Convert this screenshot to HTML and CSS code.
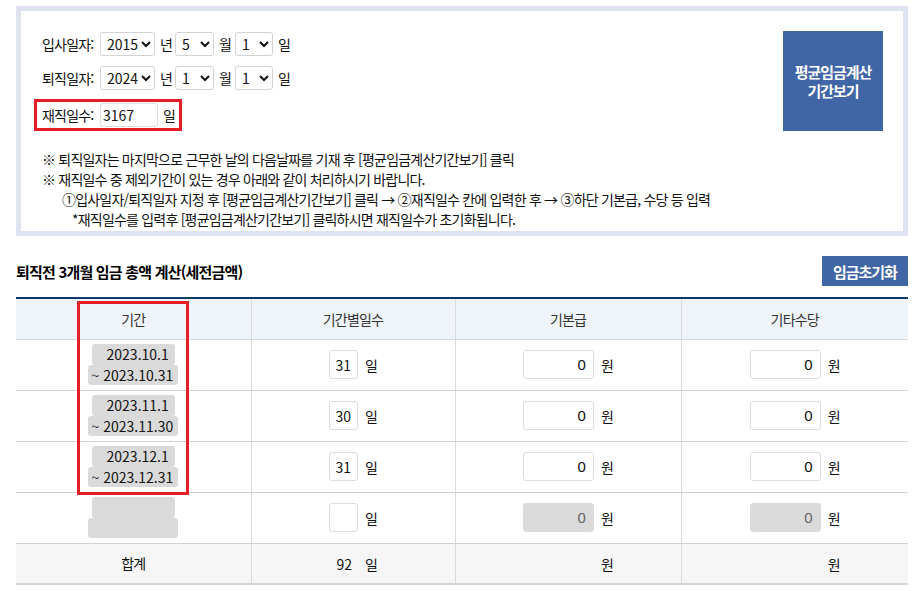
FILE: index.html
```html
<!DOCTYPE html>
<html lang="ko">
<head>
<meta charset="utf-8">
<title>평균임금 계산</title>
<link rel="stylesheet" href="styles.css">
</head>
<body>
<div class="wrap">
  <div class="box">
    <div class="top">
      <div class="dates">
        <div class="row">
          <span class="lbl">입사일자:</span>
          <select class="sel sel-y"><option>2015</option></select><span class="unit u-y">년</span>
          <select class="sel sel-m"><option>5</option></select><span class="unit u-m">월</span>
          <select class="sel sel-d"><option>1</option></select><span class="unit">일</span>
        </div>
        <div class="row">
          <span class="lbl">퇴직일자:</span>
          <select class="sel sel-y"><option>2024</option></select><span class="unit u-y">년</span>
          <select class="sel sel-m"><option>1</option></select><span class="unit u-m">월</span>
          <select class="sel sel-d"><option>1</option></select><span class="unit">일</span>
        </div>
        <div class="row row-days">
          <span class="lbl">재직일수:</span>
          <input class="days-input" type="text" value="3167"><span class="unit">일</span>
        </div>
      </div>
      <button class="calc" type="button">평균임금계산<br>기간보기</button>
    </div>
    <div class="notes">
      <p>※ 퇴직일자는 마지막으로 근무한 날의 다음날짜를 기재 후 [평균임금계산기간보기] 클릭</p>
      <p>※ 재직일수 중 제외기간이 있는 경우 아래와 같이 처리하시기 바랍니다.</p>
      <p class="ind1">①입사일자/퇴직일자 지정 후 [평균임금계산기간보기] 클릭 → ②재직일수 칸에 입력한 후 → ③하단 기본급, 수당 등 입력</p>
      <p class="ind2">*재직일수를 입력후 [평균임금계산기간보기] 클릭하시면 재직일수가 초기화됩니다.</p>
    </div>
  </div>

  <div class="title-row">
    <h2 class="title">퇴직전 3개월 임금 총액 계산(세전금액)</h2>
    <button class="reset" type="button">임금초기화</button>
  </div>

  <div class="table-wrap">
    <table class="wage">
      <colgroup>
        <col class="c1"><col class="c2"><col class="c3"><col class="c4">
      </colgroup>
      <thead>
        <tr><th>기간</th><th>기간별일수</th><th>기본급</th><th>기타수당</th></tr>
      </thead>
      <tbody>
        <tr>
          <td><span class="per p1">2023.10.1</span><span class="per p2">~ 2023.10.31</span></td>
          <td><input class="num d" value="31"><span class="u">일</span></td>
          <td><input class="num m" value="0"><span class="u">원</span></td>
          <td><input class="num m" value="0"><span class="u">원</span></td>
        </tr>
        <tr>
          <td><span class="per p1">2023.11.1</span><span class="per p2">~ 2023.11.30</span></td>
          <td><input class="num d" value="30"><span class="u">일</span></td>
          <td><input class="num m" value="0"><span class="u">원</span></td>
          <td><input class="num m" value="0"><span class="u">원</span></td>
        </tr>
        <tr>
          <td><span class="per p1">2023.12.1</span><span class="per p2">~ 2023.12.31</span></td>
          <td><input class="num d" value="31"><span class="u">일</span></td>
          <td><input class="num m" value="0"><span class="u">원</span></td>
          <td><input class="num m" value="0"><span class="u">원</span></td>
        </tr>
        <tr>
          <td><span class="per p1"></span><span class="per p2"></span></td>
          <td><input class="num d" value=""><span class="u">일</span></td>
          <td><input class="num m off" value="0" disabled><span class="u">원</span></td>
          <td><input class="num m off" value="0" disabled><span class="u">원</span></td>
        </tr>
      </tbody>
      <tfoot>
        <tr>
          <td>합계</td>
          <td><span class="tot d">92</span><span class="u">일</span></td>
          <td><span class="tot m"></span><span class="u">원</span></td>
          <td><span class="tot m"></span><span class="u">원</span></td>
        </tr>
      </tfoot>
    </table>
    <div class="highlight"></div>
  </div>
</div>
</body>
</html>
```

FILE: styles.css
```css
* { box-sizing: border-box; }
html, body { margin: 0; padding: 0; background: #fff; }
body {
  font-family: "Noto Sans CJK KR", "Noto Sans", sans-serif;
  font-size: 14px;
  color: #111;
  letter-spacing: -0.057em;
}
.wrap { padding: 6px 15px 0 16px; }

.box {
  border: 5px solid #dfe3ef;
  height: 230px;
  padding: 20px 20px 0 21px;
}
.top { display: flex; justify-content: space-between; align-items: flex-start; }
.dates { padding-top: 1px; }
.row { display: flex; align-items: center; height: 24px; margin-bottom: 10px; }
.lbl { width: 58px; white-space: nowrap; }
.sel {
  height: 24px;
  border: 1px solid #d3d3d3;
  border-radius: 3px;
  background: #fff;
  font-family: "Noto Sans CJK KR", "Noto Sans", sans-serif;
  font-size: 14px;
  color: #111;
  padding: 0 0 0 2px;
}
.sel-y { width: 55px; }
.sel-m { width: 39px; }
.sel-d { width: 38px; }
.unit { margin-left: 5px; }
.u-y { width: 15px; }
.u-m { width: 16px; }
.row-days {
  margin-left: -8px;
  margin-top: -1px;
  height: 32px;
  border: 3px solid #e41e26;
  padding: 1px 4px 1px 5px;
  align-self: flex-start;
  display: inline-flex;
  margin-bottom: 0;
}
.days-input {
  width: 58px;
  height: 24px;
  border: 1px solid #ddd;
  border-radius: 3px;
  padding: 0 2px;
  font-family: "Noto Sans CJK KR", "Noto Sans", sans-serif;
  font-size: 14px;
  color: #111;
}
.calc {
  width: 100px;
  height: 100px;
  border: 0;
  background: #4066a5;
  color: #fff;
  font-family: "Noto Sans CJK KR", "Noto Sans", sans-serif;
  font-weight: 700;
  font-size: 15px;
  line-height: 19px;
  letter-spacing: -0.07em;
  padding: 0;
}

.notes { margin-top: 18px; line-height: 20px; }
.notes p { margin: 0; white-space: nowrap; }
.notes .ind1 { padding-left: 20px; }
.notes .ind2 { padding-left: 30px; }

.title-row {
  display: flex;
  justify-content: space-between;
  align-items: center;
  margin-top: 20px;
  height: 30px;
}
.title { margin: 0; font-size: 15px; font-weight: 700; color: #000; }
.reset {
  width: 86px;
  height: 30px;
  border: 0;
  background: #4066a5;
  color: #fff;
  font-family: "Noto Sans CJK KR", "Noto Sans", sans-serif;
  font-weight: 700;
  font-size: 15px;
  letter-spacing: -0.07em;
  padding: 0;
}

.table-wrap { position: relative; margin-top: 11px; }
.wage {
  width: 100%;
  border-collapse: collapse;
  table-layout: fixed;
}
.c1 { width: 235px; }
.c2 { width: 204px; }
.c3 { width: 226px; }
.c4 { width: 227px; }
.wage th {
  height: 41px;
  background: #eff3fa;
  border-top: 2px solid #0d3a6b;
  border-bottom: 1px solid #dadada;
  font-weight: 400;
  color: #333;
  padding: 0;
}
.wage th + th, .wage td + td { border-left: 1px solid #dadada; }
.wage td {
  height: 51px;
  border-bottom: 1px solid #d2d2d2;
  text-align: center;
  padding: 0;
  white-space: nowrap;
}
.wage tfoot td {
  height: 41px;
  background: #f6f6f6;
  border-top: 1px solid #0d3a6b;
  border-bottom: 2px solid #d5d5d5;
  color: #111;
}

.per {
  display: block;
  margin: 0 auto;
  background: #dadada;
  border-radius: 3px;
  text-align: right;
  letter-spacing: 0;
  color: #111;
}
.per.p1 { width: 83px; height: 21px; line-height: 21px; padding-right: 6px; }
.per.p2 { width: 90px; height: 20px; line-height: 20px; padding-right: 5px; }

.num {
  height: 29px;
  border: 1px solid #dcdcdc;
  border-radius: 3px;
  background: #fff;
  text-align: right;
  font-family: "Noto Sans CJK KR", "Noto Sans", sans-serif;
  font-size: 14px;
  color: #111;
  vertical-align: middle;
}
.num.d { width: 29px; padding: 0 6px 0 0; }
.num.m { width: 71px; padding: 0 7px 0 0; font-family: "Liberation Sans", Arial, sans-serif; font-size: 15px; }
.num.off { background: #dadada; border-color: #dadada; color: #666; }
.u { display: inline-block; margin-left: 7px; vertical-align: middle; }
.tot { display: inline-block; text-align: right; vertical-align: middle; letter-spacing: 0; }
.tot.d { width: 29px; padding-right: 6px; }
.tot.m { width: 71px; }

.highlight {
  position: absolute;
  left: 61px;
  top: 4px;
  width: 112px;
  height: 194px;
  border: 3px solid #e41e26;
  pointer-events: none;
}
```
